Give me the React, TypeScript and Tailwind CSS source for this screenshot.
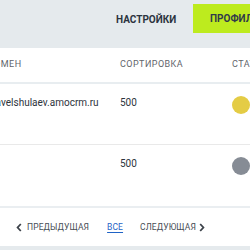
import React from 'react'

type Row = { domain: string; sort: number; color: string }

const ROWS: Row[] = [
  { domain: 'pavelshulaev.amocrm.ru', sort: 500, color: 'bg-[#e4cc45]' },
  { domain: '', sort: 500, color: 'bg-[#868c95]' },
]

const App: React.FC = () => {
  return (
    <div className="w-[250px] h-[250px] overflow-hidden bg-[#e5eaed] font-['Roboto','Liberation_Sans',sans-serif]">
      {/* верхняя панель */}
      <div className="h-[48px] flex items-start pt-[4px] whitespace-nowrap">
        <span className="ml-[116px] w-[77px] shrink-0 mt-[8px] text-[10px] font-bold text-[#2c3440]">
          НАСТРОЙКИ
        </span>
        <div className="h-[29px] flex-1 bg-[#bdeb1e] pl-[17px] flex items-center overflow-hidden">
          <span className="text-[10px] font-bold text-[#313a4a]">
            ПРОФИЛЬ
          </span>
        </div>
      </div>

      {/* таблица */}
      <div className="bg-white h-[198px] flex flex-col">
        <div className="h-[36px] shrink-0 flex items-center border-b-2 border-[#e8edf0] text-[9px] text-[#5f656b] tracking-[0.45px] whitespace-nowrap">
          <span className="w-[133px] shrink-0 ml-[-13px]">ДОМЕН</span>
          <span className="w-[112px] shrink-0">СОРТИРОВКА</span>
          <span className="shrink-0">СТАТУС</span>
        </div>
        {ROWS.map((row, i) => (
          <div
            key={i}
            className={`h-[61px] shrink-0 flex items-start whitespace-nowrap text-[10px] text-[#2d343c] ${
              i === 0 ? 'border-b border-[#e9e9e9]' : ''
            }`}
          >
            <span className="w-[130px] shrink-0 ml-[-10px] mt-[11px] overflow-hidden">
              {row.domain}
            </span>
            <span className="w-[112px] shrink-0 mt-[11px]">{row.sort}</span>
            <span
              className={`w-[18px] h-[18px] rounded-full shrink-0 mt-[12px] ${row.color}`}
            />
          </div>
        ))}
        <div className="flex-1 border-t-2 border-[#eaeef1] flex items-center pt-[1px] text-[8.5px] text-[#474d55] tracking-[0.1px] whitespace-nowrap">
          <svg width="6" height="9" viewBox="0 0 6 9" className="ml-[16px]">
            <path
              d="M4.8 1 L1.6 4.5 L4.8 8"
              fill="none"
              stroke="#3d434a"
              strokeWidth="1.8"
            />
          </svg>
          <span className="ml-[5px]">ПРЕДЫДУЩАЯ</span>
          <span className="ml-[18px] text-[#1f63c6] underline underline-offset-2">
            ВСЕ
          </span>
          <span className="ml-[17px]">СЛЕДУЮЩАЯ</span>
          <svg width="6" height="9" viewBox="0 0 6 9" className="ml-[3px]">
            <path
              d="M1.2 1 L4.4 4.5 L1.2 8"
              fill="none"
              stroke="#3d434a"
              strokeWidth="1.8"
            />
          </svg>
        </div>
      </div>
    </div>
  )
}

export default App
